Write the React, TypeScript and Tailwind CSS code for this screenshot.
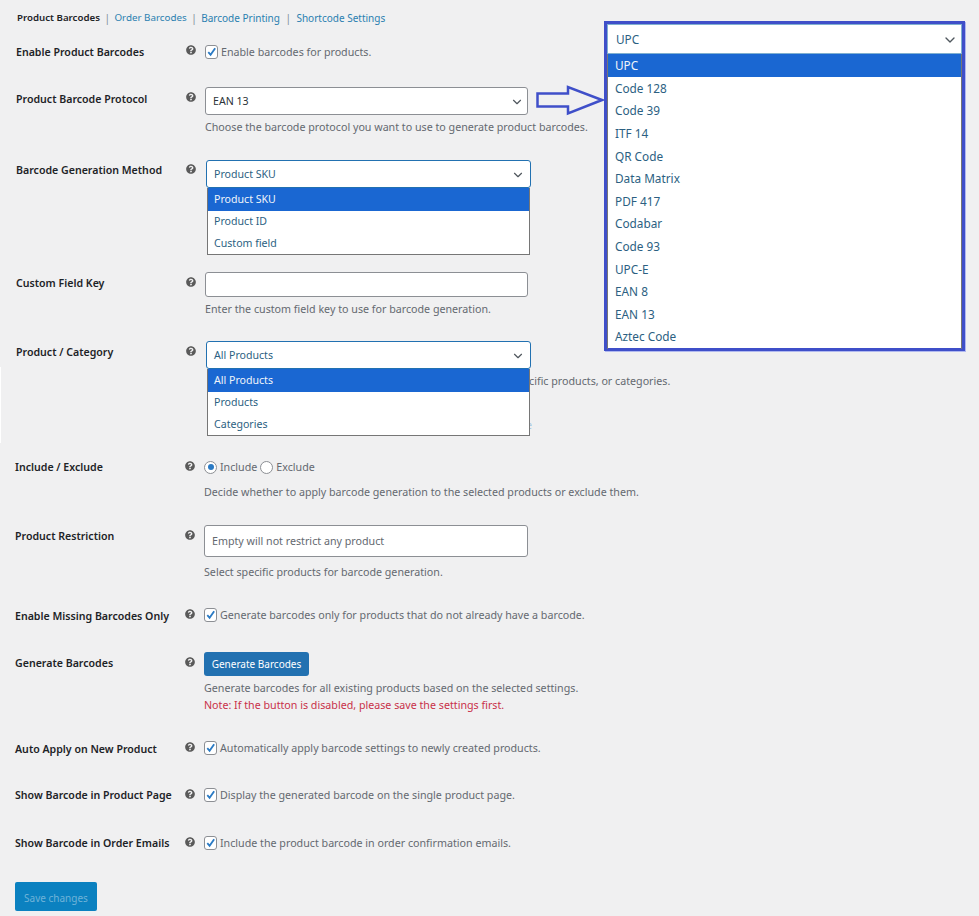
// App.tsx — barcode settings form with the opened dropdown annotation on top.

import type { ReactNode } from "react";
import { FaQuestionCircle } from "react-icons/fa";
import { ChevronDown } from "lucide-react";

interface RowProps {
  label: string;
  rowClass: string;
  labelClass: string;
  helpClass: string;
  children: ReactNode;
}

function Row({ label, rowClass, labelClass, helpClass, children }: RowProps) {
  return (
    <div className={`flex items-start ${rowClass}`}>
      <div className={`w-[170px] shrink-0 text-[10.6px] leading-4 font-semibold text-[#1d2327] ${labelClass}`}>{label}</div>
      <div className={`w-[19px] shrink-0 ${helpClass}`}>
        <FaQuestionCircle className="h-[10px] w-[10px] text-[#5a5a5a]" />
      </div>
      <div className="min-w-0 flex-1">{children}</div>
    </div>
  );
}

function Hint({ children, className = "" }: { children: ReactNode; className?: string }) {
  return <p className={`text-[10.7px] leading-4 whitespace-nowrap text-[#646970] ${className}`}>{children}</p>;
}

function Check({ text }: { text: string }) {
  return (
    <div className="flex items-center gap-[3px]">
      <span className="flex h-[14px] w-[13px] shrink-0 items-center justify-center rounded-[3px] border border-[#8c8f94] bg-white">
        <svg viewBox="0 0 12 12" className="h-[12px] w-[12px]" fill="none" stroke="#2a7ac4" strokeWidth="2">
          <path d="M2.5 6.2 5 9 10 2" />
        </svg>
      </span>
      <Hint>{text}</Hint>
    </div>
  );
}

function SelectBox({ value, focused = false }: { value: string; focused?: boolean }) {
  return (
    <div
      className={
        focused
          ? "flex h-[28px] w-[325px] items-center justify-between rounded-[3px] border border-[#2271b1] bg-white pt-[1px] pr-[5px] pl-[7px] text-[10.6px] text-[#2c5f82]"
          : "flex h-[28px] w-[323px] items-center justify-between rounded-[3px] border border-[#8c8f94] bg-white pt-[1px] pr-[3px] pl-[7px] text-[10.6px] text-[#2c3338]"
      }
    >
      <span>{value}</span>
      <ChevronDown className="h-[14px] w-[14px] text-[#50575e]" />
    </div>
  );
}

function OpenMenu({ options }: { options: string[] }) {
  return (
    <div className="absolute top-[28px] left-[1px] z-10 w-[323px] border border-t-0 border-[#767676] bg-white text-[10.6px] text-[#2c5f82]">
      {options.map((o, i) => (
        <div
          key={o}
          className={i === 0 ? "flex h-[23px] items-center bg-[#1a67d2] pl-[6px] text-[#f1f5fa]" : "flex h-[21.5px] items-center pt-[1px] pl-[6px]"}
        >
          {o}
        </div>
      ))}
    </div>
  );
}

const PROTOCOLS = [
  "UPC",
  "Code 128",
  "Code 39",
  "ITF 14",
  "QR Code",
  "Data Matrix",
  "PDF 417",
  "Codabar",
  "Code 93",
  "UPC-E",
  "EAN 8",
  "EAN 13",
  "Aztec Code",
];

export default function App() {
  return (
    <div className="relative h-[916px] w-[979px] overflow-hidden bg-[#f0f0f1] font-['Noto_Sans',sans-serif]">
      {/* white sliver on the left edge of the capture */}
      <div className="absolute top-[367px] left-0 h-[76px] w-[1px] bg-white" />

      {/* tabs */}
      <div className="flex h-[41px] items-start pt-[10px] pl-[17px] text-[10px] leading-4 text-[#2a7fb0]">
        <span className="text-[9.7px] font-semibold text-[#1d2327]">Product Barcodes</span>
        <span className="mx-[4.5px] text-[#7a8a96]">|</span>
        <span className="text-[9.8px]">Order Barcodes</span>
        <span className="mx-[4.5px] text-[#7a8a96]">|</span>
        <span>Barcode Printing</span>
        <span className="mx-[5.5px] text-[#7a8a96]">|</span>
        <span>Shortcode Settings</span>
      </div>

      <div className="pl-[16px]">
        <Row label="Enable Product Barcodes" rowClass="h-[46px]" labelClass="pt-[3px]" helpClass="pt-[4px]">
          <div className="pt-[3px]">
            <Check text="Enable barcodes for products." />
          </div>
        </Row>
        <Row label="Product Barcode Protocol" rowClass="h-[73px]" labelClass="pt-[4px]" helpClass="pt-[5px]">
          <SelectBox value="EAN 13" />
          <Hint className="mt-[4px]">Choose the barcode protocol you want to use to generate product barcodes.</Hint>
        </Row>
        <Row label="Barcode Generation Method" rowClass="h-[112px]" labelClass="pt-[2px]" helpClass="pt-[4px]">
          <div className="relative ml-[1px]">
            <SelectBox value="Product SKU" focused />
            <OpenMenu options={["Product SKU", "Product ID", "Custom field"]} />
          </div>
        </Row>
        <Row label="Custom Field Key" rowClass="h-[69px]" labelClass="pt-[3px]" helpClass="pt-[5px]">
          <div className="h-[25px] w-[323px] rounded-[3px] border border-[#8c8f94] bg-white" />
          <Hint className="mt-[4px]">Enter the custom field key to use for barcode generation.</Hint>
        </Row>
        <Row label="Product / Category" rowClass="h-[118px]" labelClass="pt-[3px]" helpClass="pt-[5px]">
          <div className="relative ml-[1px]">
            <SelectBox value="All Products" focused />
            <OpenMenu options={["All Products", "Products", "Categories"]} />
            {/* only the tails of these two hints stick out from under the open menu */}
            <Hint className="mt-[4px] pl-[323px]">cific products, or categories.</Hint>
            <Hint className="mt-[28px] pl-[320px] text-[#a8c8e0]">e</Hint>
          </div>
        </Row>
      </div>

      <div className="pl-[15px]">
        <Row label="Include / Exclude" rowClass="h-[66px]" labelClass="pt-[0px]" helpClass="pt-[2px]">
          <div className="flex items-center gap-[3px]">
            <span className="flex h-[13px] w-[13px] items-center justify-center rounded-full border border-[#8c8f94] bg-white">
              <span className="h-[6px] w-[6px] rounded-full bg-[#2a7ac4]" />
            </span>
            <Hint>Include</Hint>
            <span className="h-[13px] w-[13px] rounded-full border border-[#8c8f94] bg-white" />
            <Hint>Exclude</Hint>
          </div>
          <Hint className="mt-[9px]">Decide whether to apply barcode generation to the selected products or exclude them.</Hint>
        </Row>
        <Row label="Product Restriction" rowClass="h-[82px]" labelClass="pt-[3px]" helpClass="pt-[5px]">
          <div className="flex h-[32px] w-[324px] items-center rounded-[3px] border border-[#8c8f94] bg-white pt-[1px] pl-[7px] text-[10.7px] text-[#646970]">
            Empty will not restrict any product
          </div>
          <Hint className="mt-[7px]">Select specific products for barcode generation.</Hint>
        </Row>
        <Row label="Enable Missing Barcodes Only" rowClass="h-[45px]" labelClass="pt-[1px]" helpClass="pt-[2px]">
          <Check text="Generate barcodes only for products that do not already have a barcode." />
        </Row>
        <Row label="Generate Barcodes" rowClass="h-[88px]" labelClass="pt-[3px]" helpClass="pt-[5px]">
          <button className="flex h-[24px] w-[105px] items-center justify-center rounded-[3px] bg-[#2271b1] text-[10px] text-white">
            Generate Barcodes
          </button>
          <Hint className="mt-[4px]">Generate barcodes for all existing products based on the selected settings.</Hint>
          <Hint className="mt-[1px] text-[#c9304a]">Note: If the button is disabled, please save the settings first.</Hint>
        </Row>
        <Row label="Auto Apply on New Product" rowClass="h-[47px]" labelClass="pt-[1px]" helpClass="pt-[2px]">
          <Check text="Automatically apply barcode settings to newly created products." />
        </Row>
        <Row label="Show Barcode in Product Page" rowClass="h-[48px]" labelClass="pt-[0px]" helpClass="pt-[2px]">
          <Check text="Display the generated barcode on the single product page." />
        </Row>
        <Row label="Show Barcode in Order Emails" rowClass="h-[47px]" labelClass="pt-[0px]" helpClass="pt-[2px]">
          <Check text="Include the product barcode in order confirmation emails." />
        </Row>
        <button className="h-[29px] w-[82px] rounded-[2px] bg-[#0b81c0] pt-[3px] text-[10px] text-[#6fb3d8]">Save changes</button>
      </div>

      {/* arrow annotation */}
      <svg className="absolute top-[85px] left-[535px]" width="70" height="31" viewBox="0 0 70 31" fill="none" stroke="#3f4fc9" strokeWidth="2.5">
        <path d="M2.5 8.5H33V2L67 15 33 28.5V21.5H2.5Z" />
      </svg>

      {/* enlarged protocol dropdown */}
      <div className="absolute top-[21px] left-[604px] h-[330px] w-[361px] border-[3px] border-[#3f4fc9] bg-white shadow-[1px_1px_0_#b0b8f0]">
        <div className="flex h-[30px] items-center justify-between border border-[#7fb0d0] pt-[1px] pr-[3px] pl-[8px] text-[11.8px] text-[#2c5f82]">
          <span>UPC</span>
          <ChevronDown className="h-[16px] w-[16px] text-[#50575e]" />
        </div>
        <div className="border-x border-[#767676] text-[11.8px] text-[#2c5f82]">
          {PROTOCOLS.map((p, i) => (
            <div
              key={p}
              className={i === 0 ? "flex h-[23.4px] items-center bg-[#1a67d2] pl-[7px] text-[#f1f5fa]" : "flex h-[22.6px] items-center pl-[7px]"}
            >
              {p}
            </div>
          ))}
        </div>
      </div>
    </div>
  );
}
